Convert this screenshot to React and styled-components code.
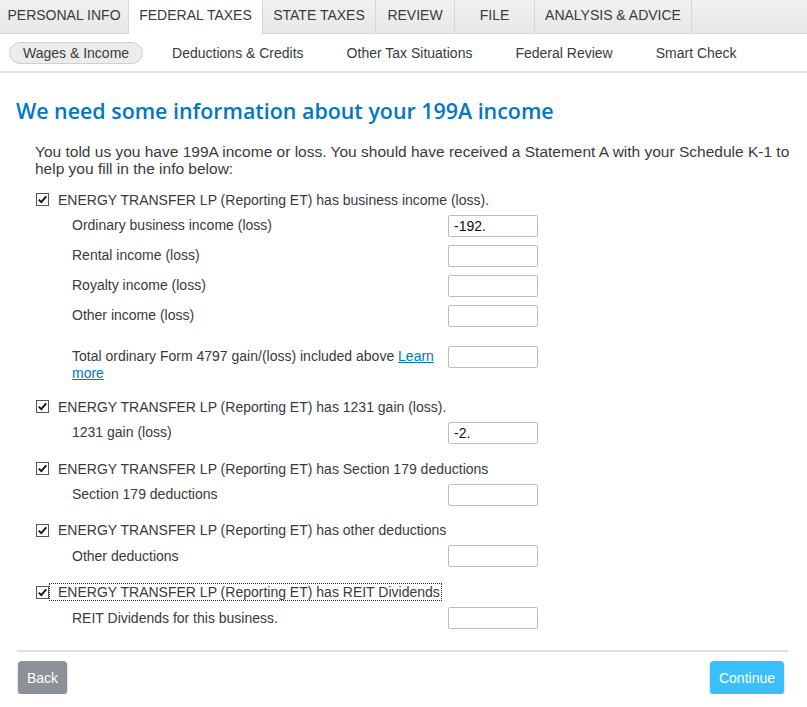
import React from 'react';
import styled, { createGlobalStyle } from 'styled-components';

const GlobalStyle = createGlobalStyle`
  html, body {
    margin: 0;
    padding: 0;
    background: #fff;
  }
  body {
    font-family: "Liberation Sans", Arial, sans-serif;
    color: #393a3d;
  }
`;

const TabBar = styled.div`
  display: flex;
  height: 34px;
  background: linear-gradient(#f1f1f1, #e7e7e7);
  border-bottom: 1px solid #d9d9d9;
  box-sizing: border-box;
`;

const Tab = styled.div`
  width: ${p => p.w}px;
  padding-top: 7px;
  text-align: center;
  font-size: 14px;
  line-height: 16px;
  text-transform: uppercase;
  color: #393a3d;
  border-right: 1px solid #d6d6d6;
  box-sizing: border-box;
  background: ${p => (p.active ? '#fff' : 'transparent')};
  height: ${p => (p.active ? '35px' : '33px')};
`;

const SubNav = styled.div`
  display: flex;
  align-items: center;
  gap: 15px;
  height: 37px;
  padding-left: 9px;
  border-bottom: 2px solid #e2e2e2;
`;

const SubItem = styled.div`
  font-size: 14px;
  line-height: 20px;
  padding: 0 13px;
  border-radius: 12px;
  border: 1px solid ${p => (p.active ? '#cfcfcf' : 'transparent')};
  background: ${p => (p.active ? '#ececec' : 'transparent')};
  color: #393a3d;
`;

const Page = styled.div`
  padding: 0 19px 0 17px;
`;

const Heading = styled.h1`
  margin: 25px 0 0 -1px;
  font-family: "Open Sans", sans-serif;
  font-weight: 600;
  font-size: 21.4px;
  line-height: 26px;
  color: #0077c5;
`;

const FormBody = styled.div`
  padding-left: 18px;
`;

const Intro = styled.p`
  margin: 19px -14px 14px 0;
  font-size: 15.5px;
  line-height: 17px;
`;

const Section = styled.div`
  margin-bottom: 16.3px;
`;

const CheckRow = styled.div`
  display: flex;
  align-items: center;
  height: 17px;
  padding-left: 1px;
  font-size: 14px;
`;

const CheckLabel = styled.span`
  margin-left: 1px;
  padding: 0 1px 0 8px;
  line-height: 16px;
  outline: ${p => (p.focused ? '1px dotted #333' : 'none')};
`;

const Fields = styled.div`
  display: flex;
  flex-direction: column;
  gap: 8px;
  margin-top: 6.5px;
  padding-left: 37px;
`;

const FieldRow = styled.div`
  display: grid;
  grid-template-columns: 366px 90px;
  column-gap: 10px;
  align-items: start;
  margin-top: ${p => (p.spaced ? '11px' : '0')};
`;

const FieldLabel = styled.div`
  font-size: 14px;
  line-height: 17px;
  padding-top: 2.5px;
`;

const LearnLink = styled.a`
  color: #0077c5;
  text-decoration: underline;
`;

const Input = styled.div`
  height: 22px;
  box-sizing: border-box;
  border: 1px solid #bdbdbd;
  border-radius: 2px;
  font-size: 14px;
  line-height: 20px;
  padding-left: 5px;
  color: #111;
`;

const Divider = styled.div`
  margin-top: 21px;
  height: 2px;
  background: #e0e0e0;
`;

const Footer = styled.div`
  display: flex;
  justify-content: space-between;
  padding: 9px 4px 0 1px;
`;

const Button = styled.div`
  height: 33px;
  padding: 0 9px;
  display: flex;
  align-items: center;
  box-sizing: border-box;
  border-radius: 4px;
  font-size: 14px;
  color: #fff;
  background: ${p => (p.primary ? '#3bbffc' : '#8d9096')};
  box-shadow: 0 1px 2px rgba(0, 0, 0, 0.35);
`;

const CheckBox = () => (
  <svg width="13" height="13" viewBox="0 0 13 13">
    <rect x="0.5" y="0.5" width="12" height="12" fill="#fff" stroke="#555" />
    <path d="M2.8 6.6 L5.3 9.2 L10.2 3.4" fill="none" stroke="#111" strokeWidth="1.9" />
  </svg>
);

const tabs = [
  ['Personal Info', 129],
  ['Federal Taxes', 134, true],
  ['State Taxes', 113],
  ['Review', 79],
  ['File', 80],
  ['Analysis & Advice', 157],
];

const subs = ['Wages & Income', 'Deductions & Credits', 'Other Tax Situations', 'Federal Review', 'Smart Check'];

const sections = [
  {
    title: 'has business income (loss).',
    fields: [
      { label: 'Ordinary business income (loss)', value: '-192.' },
      { label: 'Rental income (loss)' },
      { label: 'Royalty income (loss)' },
      { label: 'Other income (loss)' },
      { label: 'Total ordinary Form 4797 gain/(loss) included above', learn: true, spaced: true },
    ],
  },
  { title: 'has 1231 gain (loss).', fields: [{ label: '1231 gain (loss)', value: '-2.' }] },
  { title: 'has Section 179 deductions', fields: [{ label: 'Section 179 deductions' }] },
  { title: 'has other deductions', fields: [{ label: 'Other deductions' }] },
  { title: 'has REIT Dividends', focused: true, fields: [{ label: 'REIT Dividends for this business.' }] },
];

export default function App() {
  return (
    <>
      <GlobalStyle />
      <TabBar>
        {tabs.map(([name, w, active]) => (
          <Tab key={name} w={w} active={active}>{name}</Tab>
        ))}
      </TabBar>
      <SubNav>
        {subs.map((s, i) => (
          <SubItem key={s} active={i === 0}>{s}</SubItem>
        ))}
      </SubNav>
      <Page>
        <Heading>We need some information about your 199A income</Heading>
        <FormBody>
          <Intro>
            You told us you have 199A income or loss. You should have received a Statement A with your Schedule K-1 to
            help you fill in the info below:
          </Intro>
          {sections.map(sec => (
            <Section key={sec.title}>
              <CheckRow>
                <CheckBox />
                <CheckLabel focused={sec.focused}>ENERGY TRANSFER LP (Reporting ET) {sec.title}</CheckLabel>
              </CheckRow>
              <Fields>
                {sec.fields.map(f => (
                  <FieldRow key={f.label} spaced={f.spaced}>
                    <FieldLabel>
                      {f.label}
                      {f.learn && <> <LearnLink href="#">Learn more</LearnLink></>}
                    </FieldLabel>
                    <Input>{f.value}</Input>
                  </FieldRow>
                ))}
              </Fields>
            </Section>
          ))}
        </FormBody>
        <Divider />
        <Footer>
          <Button>Back</Button>
          <Button primary>Continue</Button>
        </Footer>
      </Page>
    </>
  );
}
